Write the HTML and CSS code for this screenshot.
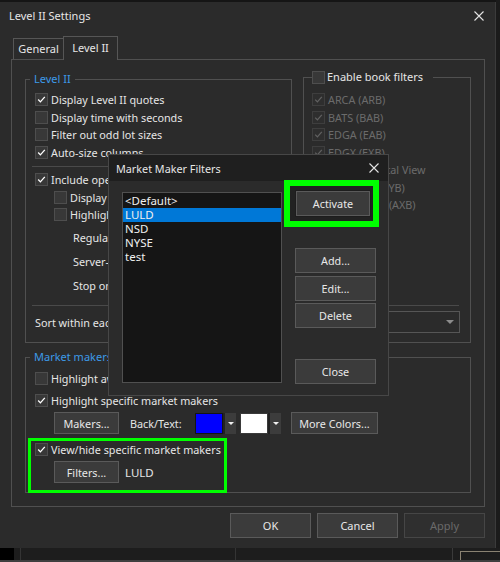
FILE: index.html
```html
<!DOCTYPE html>
<html>
<head>
<meta charset="utf-8">
<title>Level II Settings</title>
<link rel="stylesheet" href="styles.css">
</head>
<body>
<div class="screen">
  <div class="toprow">
    <div class="dialog">
      <div class="titlebar">
        <span class="title">Level II Settings</span>
        <svg class="xicon" width="10" height="10" viewBox="0 0 10 10"><path d="M0.5 0.5L9.5 9.5M9.5 0.5L0.5 9.5" stroke="#e4e4e4" stroke-width="1.1" fill="none"/></svg>
      </div>
      <div class="tabs">
        <div class="tab">General</div>
        <div class="tab active">Level II</div>
      </div>
      <div class="panel">
        <div class="l2group">
          <div class="l2top">
            <div class="l2left">
              <div class="legend">Level II</div>
              <div class="row first"><span class="cb"><svg viewBox="0 0 13 13"><path d="M2.6 6.6L5.2 9.3L10.4 3.4" fill="none" stroke="#fff" stroke-width="1.6"/></svg></span>Display Level II quotes</div>
              <div class="row"><span class="cb"></span>Display time with seconds</div>
              <div class="row"><span class="cb"></span>Filter out odd lot sizes</div>
              <div class="row"><span class="cb"><svg viewBox="0 0 13 13"><path d="M2.6 6.6L5.2 9.3L10.4 3.4" fill="none" stroke="#fff" stroke-width="1.6"/></svg></span>Auto-size columns</div>
              <div class="sep"></div>
              <div class="row incl"><span class="cb"><svg viewBox="0 0 13 13"><path d="M2.6 6.6L5.2 9.3L10.4 3.4" fill="none" stroke="#fff" stroke-width="1.6"/></svg></span>Include opening/closing quotes</div>
              <div class="row indent"><span class="cb"></span>Display session markers</div>
              <div class="row indent"><span class="cb"></span>Highlight session quotes</div>
              <div class="subrow first">Regular session:</div>
              <div class="subrow">Server-side filter:</div>
              <div class="subrow">Stop on level:</div>
            </div>
            <div class="book">
              <div class="legend booklegend"><span class="cb"></span>Enable book filters</div>
              <div class="bookrows">
                <div class="row dis"><span class="cb dcb"><svg viewBox="0 0 13 13"><path d="M2.6 6.6L5.2 9.3L10.4 3.4" fill="none" stroke="#616161" stroke-width="1.5"/></svg></span>ARCA (ARB)</div>
                <div class="row dis"><span class="cb dcb"><svg viewBox="0 0 13 13"><path d="M2.6 6.6L5.2 9.3L10.4 3.4" fill="none" stroke="#616161" stroke-width="1.5"/></svg></span>BATS (BAB)</div>
                <div class="row dis"><span class="cb dcb"><svg viewBox="0 0 13 13"><path d="M2.6 6.6L5.2 9.3L10.4 3.4" fill="none" stroke="#616161" stroke-width="1.5"/></svg></span>EDGA (EAB)</div>
                <div class="row dis"><span class="cb dcb"><svg viewBox="0 0 13 13"><path d="M2.6 6.6L5.2 9.3L10.4 3.4" fill="none" stroke="#616161" stroke-width="1.5"/></svg></span>EDGX (EXB)</div>
                <div class="row dis"><span class="cb dcb"><svg viewBox="0 0 13 13"><path d="M2.6 6.6L5.2 9.3L10.4 3.4" fill="none" stroke="#616161" stroke-width="1.5"/></svg></span>NASDAQ Total View</div>
                <div class="row dis"><span class="cb dcb"><svg viewBox="0 0 13 13"><path d="M2.6 6.6L5.2 9.3L10.4 3.4" fill="none" stroke="#616161" stroke-width="1.5"/></svg></span>BATS BYX (BYB)</div>
                <div class="row dis"><span class="cb dcb"><svg viewBox="0 0 13 13"><path d="M2.6 6.6L5.2 9.3L10.4 3.4" fill="none" stroke="#616161" stroke-width="1.5"/></svg></span>NYSE AMEX (AXB)</div>
              </div>
            </div>
          </div>
          <div class="sep wide"></div>
          <div class="sortrow">
            <span>Sort within each price level:</span>
            <div class="combo"><span>Time</span><span class="tri grey"></span></div>
          </div>
        </div>

        <div class="mm">
          <div class="legend">Market makers</div>
          <div class="mrow r1"><span class="cb"></span>Highlight away market makers</div>
          <div class="mrow r2"><span class="cb"><svg viewBox="0 0 13 13"><path d="M2.6 6.6L5.2 9.3L10.4 3.4" fill="none" stroke="#fff" stroke-width="1.6"/></svg></span>Highlight specific market makers</div>
          <div class="btnrow">
            <div class="btn makers">Makers...</div>
            <span class="bt">Back/Text:</span>
            <div class="swcombo first"><span class="swatch blue"></span><span class="swarrow"><span class="tri"></span></span></div>
            <div class="swcombo"><span class="swatch white"></span><span class="swarrow"><span class="tri"></span></span></div>
            <div class="btn more">More Colors...</div>
          </div>
          <div class="greenbox">
            <div class="grow"><span class="cb"><svg viewBox="0 0 13 13"><path d="M2.6 6.6L5.2 9.3L10.4 3.4" fill="none" stroke="#fff" stroke-width="1.6"/></svg></span>View/hide specific market makers</div>
            <div class="frow"><div class="btn filters">Filters...</div><span class="luld">LULD</span></div>
          </div>
        </div>
      </div>
      <div class="buttons">
        <div class="btn big">OK</div>
        <div class="btn big">Cancel</div>
        <div class="btn big disabled">Apply</div>
      </div>

      <div class="modal">
        <div class="mtitle">
          <span>Market Maker Filters</span>
          <svg width="10" height="10" viewBox="0 0 10 10"><path d="M0.5 0.5L9.5 9.5M9.5 0.5L0.5 9.5" stroke="#e4e4e4" stroke-width="1.1" fill="none"/></svg>
        </div>
        <div class="mbody">
          <div class="listbox">
            <div class="item">&lt;Default&gt;</div>
            <div class="item sel">LULD</div>
            <div class="item">NSD</div>
            <div class="item">NYSE</div>
            <div class="item">test</div>
          </div>
          <div class="mcol">
            <div class="gbox"><div class="btn activate">Activate</div></div>
            <div class="btn mb add">Add...</div>
            <div class="btn mb edit">Edit...</div>
            <div class="btn mb del">Delete</div>
            <div class="btn mb close">Close</div>
          </div>
        </div>
      </div>
    </div>
    <div class="rightstrip"></div>
  </div>
  <div class="bottomstrip">
    <span class="bs1"></span><span class="bs2"></span><span class="bs3"></span><span class="bs4"></span><span class="bs5"></span><span class="bs6"></span>
  </div>
</div>
</body>
</html>
```

FILE: styles.css
```css
* { box-sizing: border-box; }
html, body { margin: 0; padding: 0; }
body {
  width: 500px;
  height: 562px;
  overflow: hidden;
  background: #151515;
  font-family: "Noto Sans", sans-serif;
  font-size: 10.8px;
  color: #e6e6e6;
}
.screen { display: flex; flex-direction: column; width: 500px; height: 562px; }
.toprow { display: flex; height: 548px; }
.dialog {
  position: relative;
  width: 496px;
  height: 546px;
  margin-top: 2px;
  background: #2b2b2b;
  border-right: 1px solid #3b3b3b;
}
.rightstrip { flex: 1; background: #1b1b1b; }

.titlebar {
  height: 34px;
  display: flex;
  justify-content: space-between;
  align-items: flex-start;
  padding: 0 11px 0 9px;
}
.title { line-height: 28px; font-size: 11px; }
.xicon { margin-top: 9px; }

.tabs {
  display: flex;
  align-items: flex-end;
  height: 23px;
  padding-left: 13px;
}
.tab {
  border: 1px solid #565656;
  border-bottom: none;
  background: #2b2b2b;
  text-align: center;
  white-space: nowrap;
  font-size: 11px;
}
.tab:first-child { width: 51px; height: 21px; line-height: 20px; }
.tab.active {
  width: 55px;
  height: 24px;
  line-height: 21px;
  margin-left: -1px;
  margin-bottom: -1px;
  position: relative;
  z-index: 1;
}

.panel {
  width: 474px;
  height: 448px;
  margin-left: 11px;
  border: 1px solid #505050;
  padding: 19px 0 0 13px;
}

.legend {
  width: fit-content;
  margin: -9px 0 0 4px;
  padding: 0 4px;
  line-height: 16px;
  background: #2b2b2b;
  color: #3d9ae8;
  white-space: nowrap;
  font-size: 11px;
}

.l2group {
  width: 446px;
  border: 1px solid #505050;
  border-top: none;
  padding-bottom: 9px;
}
.l2top { display: flex; height: 221px; }
.l2left {
  width: 266px;
  border-top: 1px solid #505050;
  border-right: 1px solid #505050;
  white-space: nowrap;
}
.row {
  display: flex;
  align-items: center;
  height: 17.5px;
  padding-left: 9px;
  white-space: nowrap;
}
.row.first { margin-top: 4px; }
.row.incl { margin-top: 4px; }
.row.indent { padding-left: 28px; }
.subrow {
  height: 24px;
  line-height: 24px;
  padding-left: 47px;
}
.subrow.first { margin-top: 2.5px; }
.sep {
  margin: 5px 6px 0 6px;
  border-top: 1px solid #4a4a4a;
}
.sep.wide { margin: 5px 11px 0 6px; }

.cb {
  flex: none;
  width: 13px;
  height: 13px;
  margin-right: 3px;
  background: #383838;
  border: 1px solid #4e4e4e;
  display: flex;
}
.cb svg { width: 11px; height: 11px; }
.cb.dcb { background: #2e2e2e; border-color: #3e3e3e; }

.book {
  width: 168px;
  margin-left: 11px;
  margin-right: -1px;
  margin-top: -2px;
  border: 1px solid #505050;
  border-bottom: none;
}
.booklegend {
  display: flex;
  align-items: center;
  margin-left: 8px;
  padding: 0 10px 0 0;
  color: #e6e6e6;
}
.booklegend .cb { margin-right: 2px; }
.bookrows { padding-top: 6px; }
.bookrows .row { padding-left: 8px; }
.row.dis { color: #6b6b6b; }

.sortrow {
  margin-top: 5px;
  height: 22px;
  display: flex;
  align-items: center;
  justify-content: space-between;
  padding: 0 10px 0 9px;
}
.combo {
  width: 158px;
  height: 22px;
  border: 1px solid #565656;
  display: flex;
  align-items: center;
  justify-content: space-between;
  padding: 0 5px 0 4px;
}
.tri {
  width: 0;
  height: 0;
  border-left: 3px solid transparent;
  border-right: 3px solid transparent;
  border-top: 3px solid #f0f0f0;
}
.tri.grey {
  border-left-width: 4px;
  border-right-width: 4px;
  border-top: 4px solid #8c8c8c;
}

.mm {
  width: 446px;
  margin-top: 14px;
  height: 136px;
  border: 1px solid #505050;
}
.mrow {
  display: flex;
  align-items: center;
  height: 18px;
  padding-left: 9px;
  white-space: nowrap;
}
.mrow.r1 { margin-top: 4px; }
.mrow.r2 { margin-top: 4px; }
.btnrow {
  display: flex;
  align-items: center;
  height: 22px;
  margin-top: 3px;
  padding-left: 28px;
}
.btn {
  display: flex;
  align-items: center;
  justify-content: center;
  background: #3b3b3b;
  border: 1px solid #5a5a5a;
  color: #e8e8e8;
  white-space: nowrap;
}
.btn.makers { width: 65px; height: 22px; }
.bt { margin-left: 11px; width: 57px; flex: none; white-space: nowrap; }
.swcombo {
  display: flex;
  height: 21px;
  margin-left: 8px;
  background: #3a3a3a;
}
.swcombo + .swcombo { margin-left: 4px; }
.swatch {
  width: 28px;
  height: 21px;
  border: 1px solid #141414;
}
.swatch.blue { background: #0000ff; }
.swatch.white { background: #ffffff; border-color: #3a3a3a; }
.swarrow {
  width: 13px;
  height: 21px;
  border-left: 2px solid #222;
  background: #3c3c3c;
  display: flex;
  align-items: center;
  justify-content: center;
}
.btn.more { width: 87px; height: 22px; margin-left: 10px; }

.greenbox {
  width: 199px;
  height: 55px;
  margin: 4px 0 -1px 2px;
  border: 3px solid #00ff00;
  position: relative;
}
.grow {
  display: flex;
  align-items: center;
  height: 16px;
  padding-left: 4px;
  white-space: nowrap;
}
.frow {
  display: flex;
  align-items: center;
  margin-top: 4px;
  padding-left: 23px;
}
.btn.filters { width: 65px; height: 22px; }
.luld { margin-left: 6px; font-size: 11.5px; }

.buttons {
  display: flex;
  justify-content: flex-end;
  gap: 6px;
  margin-top: 6px;
  padding-right: 10px;
}
.btn.big { width: 81px; height: 25px; font-size: 11px; }
.btn.disabled { background: #2f2f2f; border-color: #464646; color: #6a6a6a; }

.modal {
  position: absolute;
  left: 108px;
  top: 152px;
  width: 281px;
  height: 242px;
  background: #2b2b2b;
  border: 1px solid #474747;
  z-index: 5;
}
.mtitle {
  height: 26px;
  background: #1f1f1f;
  display: flex;
  align-items: center;
  justify-content: space-between;
  padding: 0 9px 0 7px;
}
.mbody { display: flex; align-items: flex-start; }
.listbox {
  width: 160px;
  height: 191px;
  margin: 11px 0 0 13px;
  background: #151515;
  border: 1px solid #505050;
  padding-top: 1px;
}
.item {
  height: 14px;
  line-height: 14px;
  padding-left: 2px;
  color: #f0f0f0;
  font-size: 11.5px;
}
.item.sel { background: #0078d7; }
.mcol {
  display: flex;
  flex-direction: column;
  align-items: flex-start;
  margin: -1px 0 0 2px;
}
.gbox {
  width: 95px;
  height: 47px;
  border: 6px solid #00ff00;
  background: #222;
  padding: 4px 0 0 5px;
  position: relative;
}
.btn.activate { width: 76px; height: 27px; border-color: #1d1d1d; box-shadow: inset 0 0 0 1px #5a5a5a; }
.btn.mb { width: 81px; height: 25px; margin-left: 11px; }
.btn.add { margin-top: 21px; }
.btn.edit { margin-top: 3px; }
.btn.del { margin-top: 2px; }
.btn.close { margin-top: 31px; }

.bottomstrip {
  display: flex;
  height: 14px;
  background: #1d1d1d;
  border-bottom: 2px solid #3f3f3f;
}
.bs1 { width: 14px; background: #000; }
.bs2 { width: 6px; }
.bs3 { width: 215px; border-left: 1px solid #343434; }
.bs4 { width: 217px; border-left: 1px solid #343434; }
.bs5 { width: 8px; border-left: 1px solid #3a3a3a; }
.bs6 { flex: 1; margin-top: 3px; border-left: 1px solid #8a8272; border-top: 1px solid #8a8272; }
```
